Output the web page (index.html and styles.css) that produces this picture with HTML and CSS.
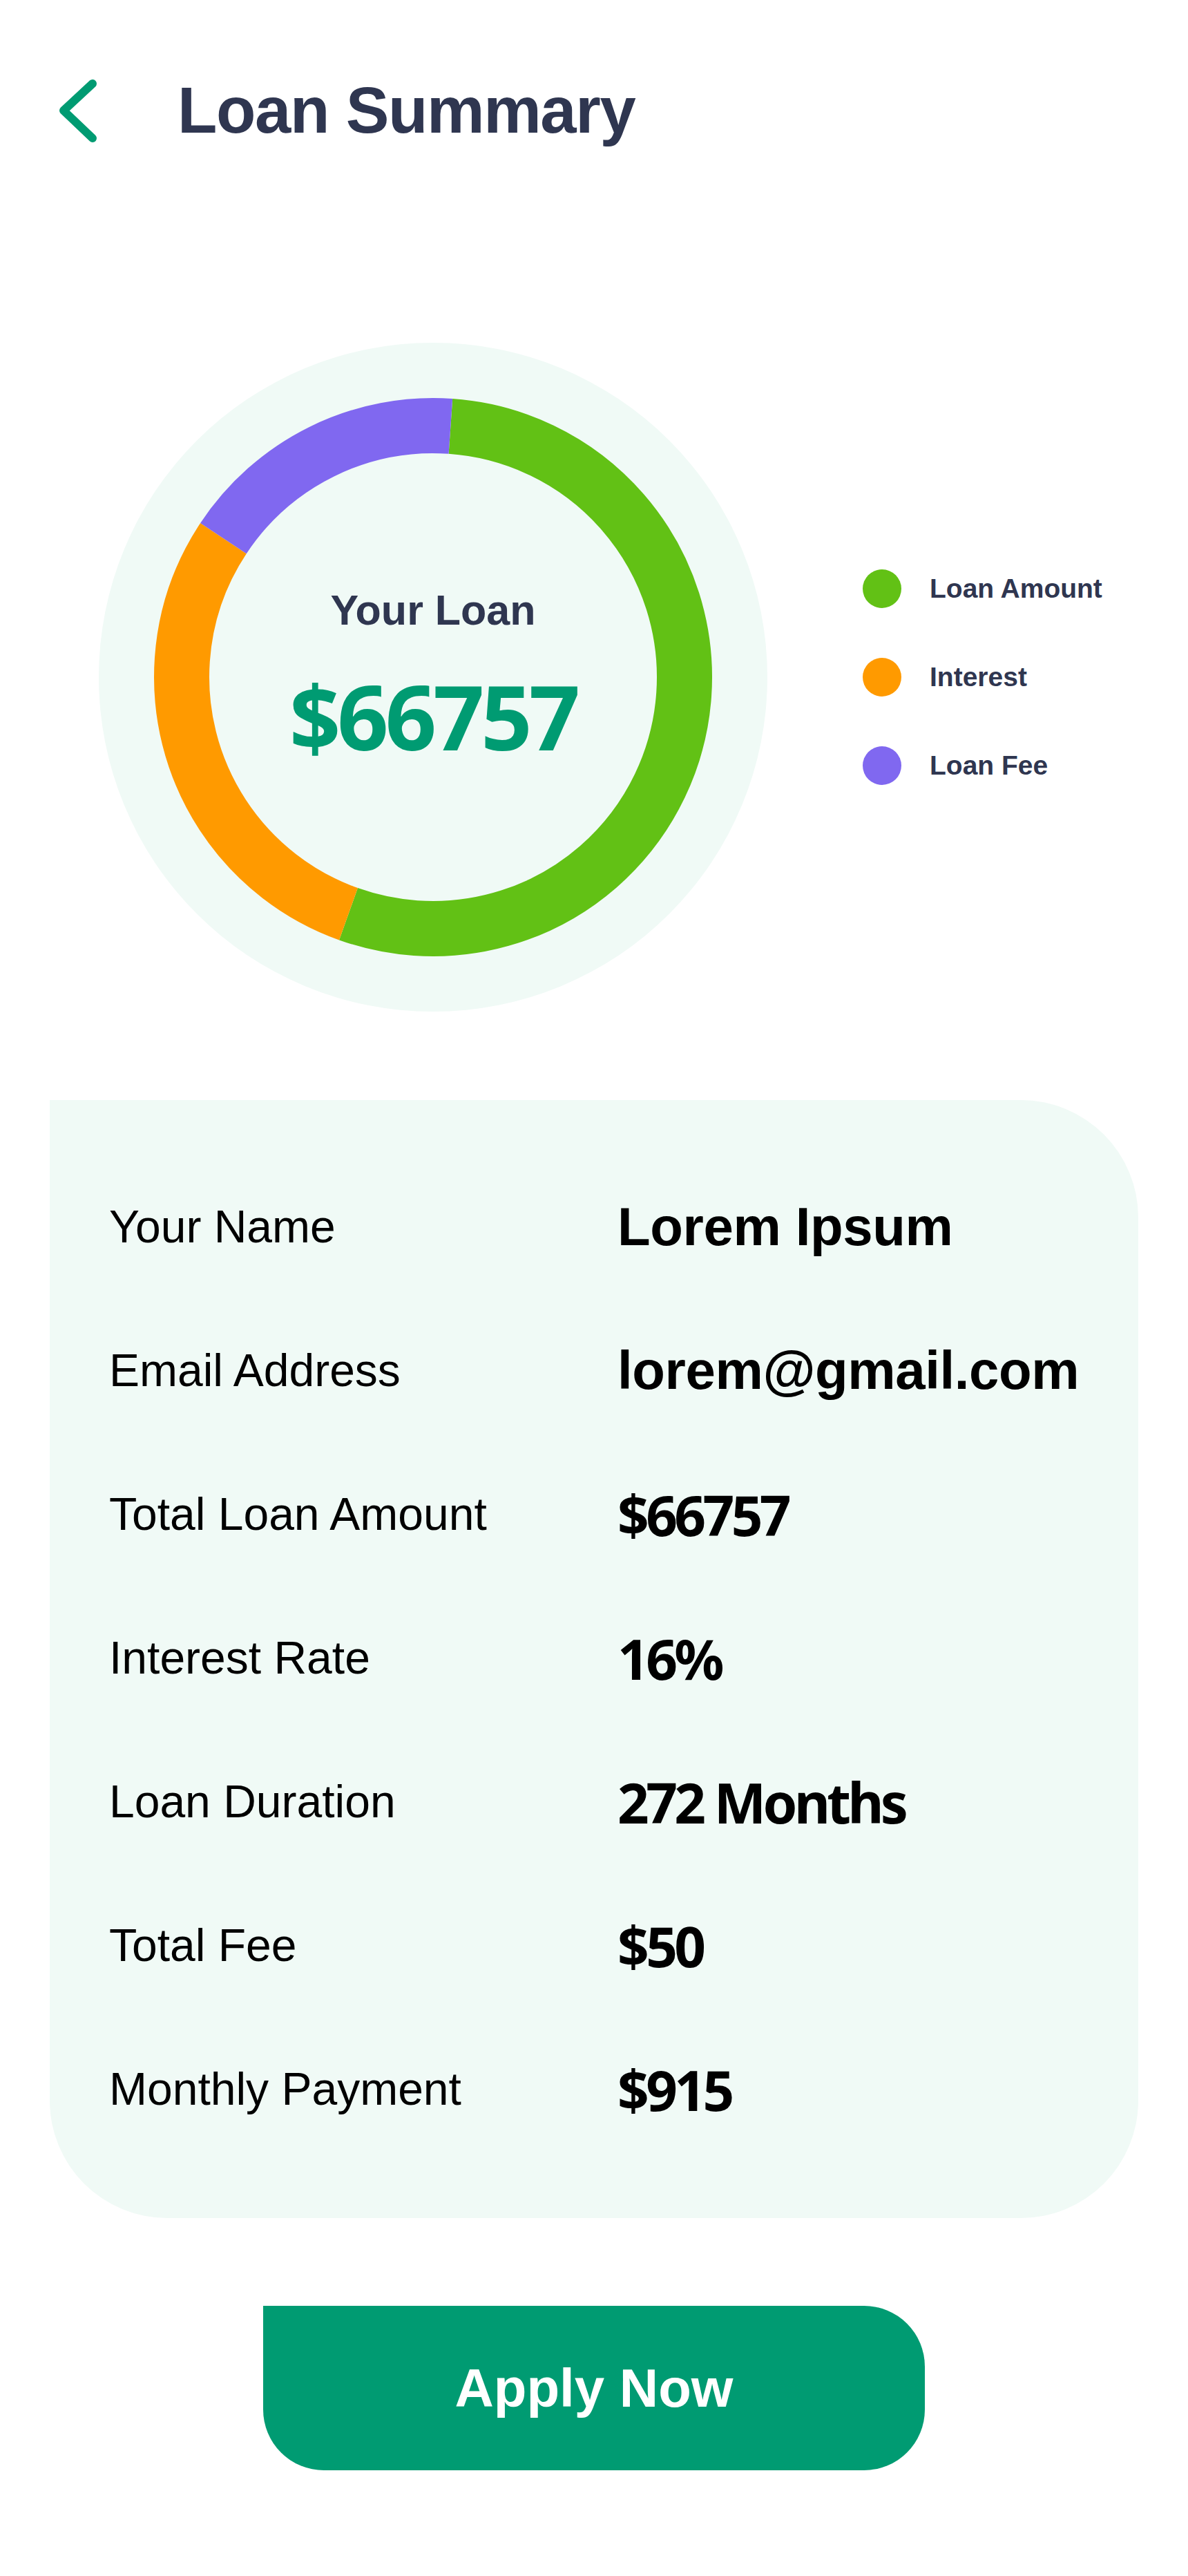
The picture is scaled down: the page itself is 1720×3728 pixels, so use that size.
FILE: index.html
```html
<!DOCTYPE html>
<html lang="en">
<head>
<meta charset="utf-8">
<title>Loan Summary</title>
<link rel="stylesheet" href="styles.css">
</head>
<body>
<div class="page">
  <header class="header">
    <svg class="back" viewBox="0 0 64 100" width="64" height="100" aria-hidden="true">
      <path d="M54 11 L12 50 L54 90" fill="none" stroke="#009B72" stroke-width="12" stroke-linecap="round" stroke-linejoin="round"/>
    </svg>
    <h1 class="title">Loan Summary</h1>
  </header>

  <section class="chart-row">
    <div class="donut">
      <svg class="donut-svg" viewBox="0 0 968 968" width="968" height="968" aria-hidden="true">
        <circle cx="484" cy="484" r="484" fill="#F0FAF6"/>
        <g transform="rotate(-86 484 484)">
          <circle cx="484" cy="484" r="364" fill="none" stroke="#62C115" stroke-width="80" stroke-dasharray="1242.6 3000" stroke-dashoffset="0"/>
          <circle cx="484" cy="484" r="364" fill="none" stroke="#FF9A00" stroke-width="80" stroke-dasharray="659.4 3000" stroke-dashoffset="-1242.6"/>
          <circle cx="484" cy="484" r="364" fill="none" stroke="#8068F0" stroke-width="80" stroke-dasharray="385.2 3000" stroke-dashoffset="-1902"/>
        </g>
      </svg>
      <div class="donut-text">
        <div class="donut-label">Your Loan</div>
        <div class="donut-value">$66757</div>
      </div>
    </div>
    <ul class="legend">
      <li class="legend-item"><span class="dot dot-green"></span><span class="legend-text">Loan Amount</span></li>
      <li class="legend-item"><span class="dot dot-orange"></span><span class="legend-text">Interest</span></li>
      <li class="legend-item"><span class="dot dot-purple"></span><span class="legend-text">Loan Fee</span></li>
    </ul>
  </section>

  <section class="card">
    <div class="row"><span class="label">Your Name</span><span class="value">Lorem Ipsum</span></div>
    <div class="row"><span class="label">Email Address</span><span class="value">lorem@gmail.com</span></div>
    <div class="row"><span class="label">Total Loan Amount</span><span class="value num">$66757</span></div>
    <div class="row"><span class="label">Interest Rate</span><span class="value num">16%</span></div>
    <div class="row"><span class="label">Loan Duration</span><span class="value num">272 Months</span></div>
    <div class="row"><span class="label">Total Fee</span><span class="value num">$50</span></div>
    <div class="row"><span class="label">Monthly Payment</span><span class="value num">$915</span></div>
  </section>

  <div class="actions">
    <button class="apply" type="button">Apply Now</button>
  </div>
</div>
</body>
</html>
```

FILE: styles.css
```css
* { box-sizing: border-box; }

html, body {
  margin: 0;
  padding: 0;
  background: #ffffff;
}

body {
  font-family: "Liberation Sans", Arial, sans-serif;
  color: #000;
}

.page {
  width: 1720px;
  height: 3728px;
  overflow: hidden;
}

/* Header */
.header {
  display: flex;
  align-items: center;
  padding-top: 110px;
  padding-left: 80px;
  height: 210px;
}

.back {
  display: block;
  flex: none;
}

.title {
  margin: 0 0 0 113px;
  font-family: "Liberation Sans", Arial, sans-serif;
  font-weight: 700;
  font-size: 94px;
  line-height: 100px;
  letter-spacing: -1.4px;
  color: #2F3650;
}

/* Chart */
.chart-row {
  display: flex;
  align-items: center;
  margin-top: 286px;
  padding-left: 143px;
}

.donut {
  display: grid;
  width: 968px;
  height: 968px;
  flex: none;
}

.donut-svg {
  grid-area: 1 / 1;
  display: block;
}

.donut-text {
  grid-area: 1 / 1;
  display: flex;
  flex-direction: column;
  align-items: center;
  padding-top: 352px;
}

.donut-label {
  font-family: "Liberation Sans", Arial, sans-serif;
  font-weight: 700;
  font-size: 61px;
  line-height: 70px;
  color: #2F3650;
}

.donut-value {
  margin-top: 48px;
  font-family: "Noto Sans", "Open Sans", sans-serif;
  font-weight: 700;
  font-size: 130px;
  line-height: 140px;
  letter-spacing: -5px;
  color: #009B72;
}

.legend {
  list-style: none;
  margin: 0 0 0 138px;
  padding: 0;
  display: flex;
  flex-direction: column;
  gap: 72px;
}

.legend-item {
  display: flex;
  align-items: center;
  height: 56px;
}

.dot {
  width: 56px;
  height: 56px;
  border-radius: 50%;
  flex: none;
}

.dot-green { background: #62C115; }
.dot-orange { background: #FF9A00; }
.dot-purple { background: #8068F0; }

.legend-text {
  margin-left: 41px;
  font-family: "Liberation Sans", Arial, sans-serif;
  font-weight: 700;
  font-size: 39px;
  color: #2F3650;
  white-space: nowrap;
}

/* Card */
.card {
  margin-top: 128px;
  margin-left: 72px;
  width: 1576px;
  height: 1618px;
  background: #F0FAF6;
  border-radius: 0 170px 170px 170px;
  padding: 79px 0 83px 86px;
  display: flex;
  flex-direction: column;
}

.row {
  display: flex;
  align-items: center;
  height: 208px;
}

.label {
  width: 736px;
  flex: none;
  font-family: "Liberation Sans", Arial, sans-serif;
  font-size: 66px;
  color: #000;
  white-space: nowrap;
}

.value {
  font-family: "Liberation Sans", Arial, sans-serif;
  font-weight: 700;
  font-size: 78px;
  letter-spacing: -0.4px;
  color: #000;
  white-space: nowrap;
}

.value.num {
  font-family: "Noto Sans", "Open Sans", sans-serif;
  font-size: 80px;
  letter-spacing: -4.6px;
}

/* Button */
.actions {
  margin-top: 127px;
  padding-left: 381px;
}

.apply {
  display: flex;
  align-items: center;
  justify-content: center;
  width: 958px;
  height: 238px;
  border: 0;
  border-radius: 0 88px 88px 88px;
  background: #009B72;
  color: #fff;
  font-family: "Liberation Sans", Arial, sans-serif;
  font-weight: 700;
  font-size: 78px;
  padding: 0;
}
```
